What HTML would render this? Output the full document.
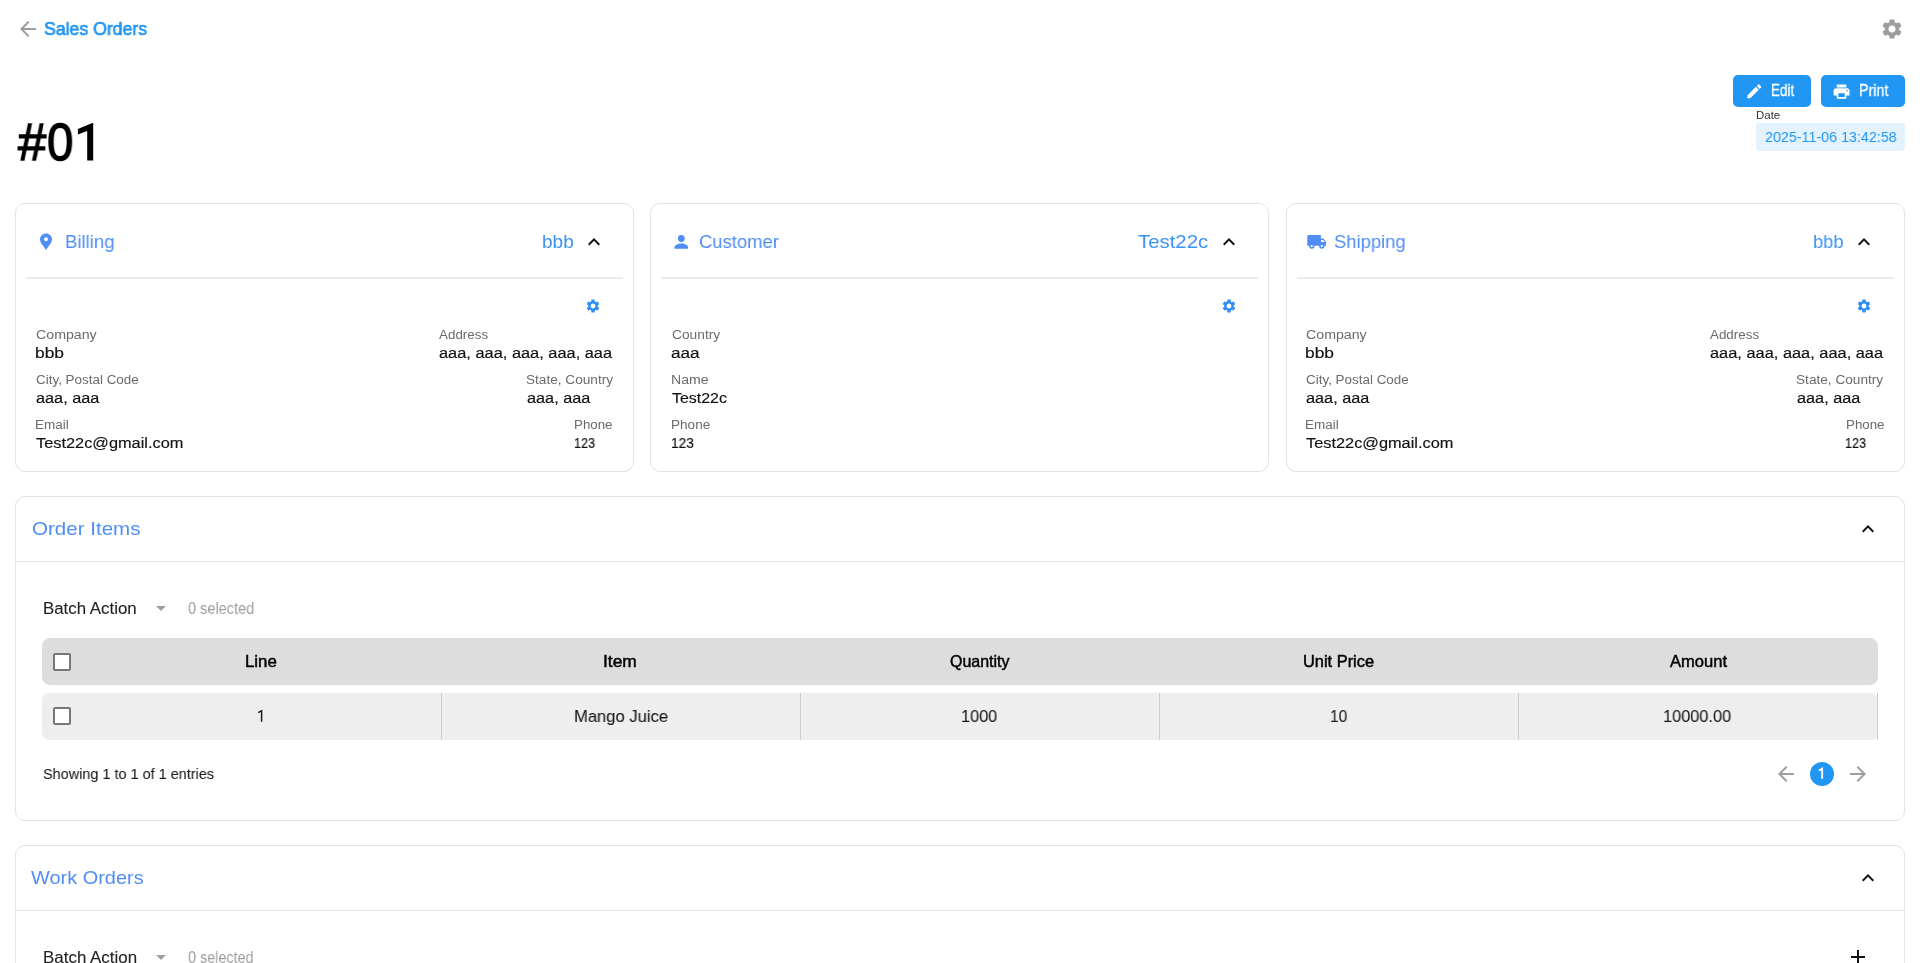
<!DOCTYPE html>
<html><head><meta charset="utf-8"><title>Sales Order #01</title>
<style>
html,body{margin:0;padding:0;background:#fff;width:1920px;height:963px;overflow:hidden;position:relative}
body{font-family:"Liberation Sans",sans-serif}
.t{position:absolute;white-space:nowrap;transform-origin:0 0;will-change:transform}
.r{position:absolute}
.i{position:absolute;overflow:visible}
</style></head><body>
<svg class="i" style="left:16px;top:17px;width:24px;height:24px" viewBox="0 0 24 24"><path fill="#9e9e9e" d="M20 11H7.83l5.59-5.59L12 4l-8 8 8 8 1.41-1.41L7.83 13H20v-2z"/></svg>
<svg class="i mh" style="left:70px;top:118px;width:30px;height:48px" viewBox="70 118 30 48"><path fill="#000" d="M93.2 123.1V160.6H87.2V130.9L77.9 134.4V128.9L92.3 123.1Z"/></svg>
<svg class="i" style="left:1880.2px;top:17px;width:24px;height:24px" viewBox="0 0 24 24"><path fill="#9e9e9e" d="M19.14 12.94c.04-.3.06-.61.06-.94 0-.32-.02-.64-.07-.94l2.03-1.58c.18-.14.23-.41.12-.61l-1.92-3.32c-.12-.22-.37-.29-.59-.22l-2.39.96c-.5-.38-1.03-.7-1.62-.94l-.36-2.54c-.04-.24-.24-.41-.48-.41h-3.84c-.24 0-.43.17-.47.41l-.36 2.54c-.59.24-1.13.57-1.62.94l-2.39-.96c-.22-.08-.47 0-.59.22L2.74 8.87c-.12.21-.08.47.12.61l2.03 1.58c-.05.3-.09.63-.09.94s.02.64.07.94l-2.03 1.58c-.18.14-.23.41-.12.61l1.92 3.32c.12.22.37.29.59.22l2.39-.96c.5.38 1.03.7 1.62.94l.36 2.54c.05.24.24.41.48.41h3.84c.24 0 .44-.17.47-.41l.36-2.54c.59-.24 1.13-.56 1.62-.94l2.39.96c.22.08.47 0 .59-.22l1.92-3.32c.12-.22.07-.47-.12-.61l-2.01-1.58zM12 15.6c-1.98 0-3.6-1.62-3.6-3.6s1.62-3.6 3.6-3.6 3.6 1.62 3.6 3.6-1.62 3.6-3.6 3.6z"/></svg>
<div class="r" style="left:1733px;top:75px;width:78px;height:32px;background:#2196f3;border-radius:5px"></div>
<div class="r" style="left:1821px;top:75px;width:84px;height:32px;background:#2196f3;border-radius:5px"></div>
<svg class="i" style="left:1744.6px;top:81.7px;width:18.67px;height:18.67px" viewBox="0 0 24 24"><path fill="#fff" d="M3 17.25V21h3.75L17.81 9.94l-3.75-3.75L3 17.25zM20.71 7.04c.39-.39.39-1.02 0-1.41l-2.34-2.34c-.39-.39-1.02-.39-1.41 0l-1.83 1.83 3.75 3.75 1.83-1.83z"/></svg>
<svg class="i" style="left:1832.4px;top:81.6px;width:19.1px;height:19.1px" viewBox="0 0 24 24"><path fill="#fff" d="M19 8H5c-1.66 0-3 1.34-3 3v6h4v4h12v-4h4v-6c0-1.66-1.34-3-3-3zm-3 11H8v-5h8v5zm3-7c-.55 0-1-.45-1-1s.45-1 1-1 1 .45 1 1-.45 1-1 1zm-1-9H6v4h12V3z"/></svg>
<div class="r" style="left:1756px;top:123px;width:149px;height:28px;background:#e3f2fd;border-radius:4px"></div>
<div class="r" style="left:15px;top:203px;width:617px;height:267px;border:1px solid #e2e2e2;border-radius:10px"></div>
<div class="r" style="left:26px;top:277px;width:597px;height:2px;background:#ececec"></div>
<div class="r" style="left:650px;top:203px;width:617px;height:267px;border:1px solid #e2e2e2;border-radius:10px"></div>
<div class="r" style="left:661px;top:277px;width:597px;height:2px;background:#ececec"></div>
<div class="r" style="left:1286px;top:203px;width:617px;height:267px;border:1px solid #e2e2e2;border-radius:10px"></div>
<div class="r" style="left:1297px;top:277px;width:597px;height:2px;background:#ececec"></div>
<svg class="i" style="left:34px;top:231px;width:24px;height:24px" viewBox="0 0 24 24"><path fill="#4f8df7" fill-rule="evenodd" d="M12 2.4c-3.3 0-6 2.6-6 5.9 0 1.5.5 2.7 1.1 3.8L12 19l4.9-6.9c.6-1.1 1.1-2.3 1.1-3.8 0-3.3-2.7-5.9-6-5.9zm0 3.9a2 2 0 1 1 0 4 2 2 0 0 1 0-4z"/></svg>
<svg class="i" style="left:669px;top:230px;width:24px;height:24px" viewBox="0 0 24 24"><circle fill="#4f8df7" cx="12.3" cy="8.5" r="3.4"/><path fill="#4f8df7" d="M5.4 18.8v-1.3c0-2.2 3.4-4 6.9-4s6.9 1.8 6.9 4v1.3z"/></svg>
<svg class="i" style="left:0;top:0;width:1920px;height:963px" viewBox="0 0 1920 963">
<path fill="#4f8df7" fill-rule="evenodd" d="M1307.3 236.2q0-1.2 1.2-1.2H1320.9V238.6H1323.4L1326 241.6V245.7H1307.3ZM1321 239.9H1323.2L1325 242.1H1321Z"/>
<circle cx="1311.8" cy="246.1" r="2.7" fill="#4f8df7"/><circle cx="1321.8" cy="246.1" r="2.7" fill="#4f8df7"/>
<circle cx="1311.8" cy="246.1" r="1.1" fill="#fff"/><circle cx="1321.8" cy="246.1" r="1.1" fill="#fff"/>
</svg>
<svg class="i" style="left:581.6px;top:230.2px;width:24px;height:24px" viewBox="0 0 24 24"><path fill="#111" d="M12 8l-6 6 1.41 1.41L12 10.83l4.58 4.58L18 14z"/></svg>
<svg class="i" style="left:1216.9px;top:230.2px;width:24px;height:24px" viewBox="0 0 24 24"><path fill="#111" d="M12 8l-6 6 1.41 1.41L12 10.83l4.58 4.58L18 14z"/></svg>
<svg class="i" style="left:1852.4px;top:230.2px;width:24px;height:24px" viewBox="0 0 24 24"><path fill="#111" d="M12 8l-6 6 1.41 1.41L12 10.83l4.58 4.58L18 14z"/></svg>
<svg class="i" style="left:585.1px;top:297.7px;width:16px;height:16px" viewBox="0 0 24 24"><path fill="#2f8ff5" d="M19.14 12.94c.04-.3.06-.61.06-.94 0-.32-.02-.64-.07-.94l2.03-1.58c.18-.14.23-.41.12-.61l-1.92-3.32c-.12-.22-.37-.29-.59-.22l-2.39.96c-.5-.38-1.03-.7-1.62-.94l-.36-2.54c-.04-.24-.24-.41-.48-.41h-3.84c-.24 0-.43.17-.47.41l-.36 2.54c-.59.24-1.13.57-1.62.94l-2.39-.96c-.22-.08-.47 0-.59.22L2.74 8.87c-.12.21-.08.47.12.61l2.03 1.58c-.05.3-.09.63-.09.94s.02.64.07.94l-2.03 1.58c-.18.14-.23.41-.12.61l1.92 3.32c.12.22.37.29.59.22l2.39-.96c.5.38 1.03.7 1.62.94l.36 2.54c.05.24.24.41.48.41h3.84c.24 0 .44-.17.47-.41l.36-2.54c.59-.24 1.13-.56 1.62-.94l2.39.96c.22.08.47 0 .59-.22l1.92-3.32c.12-.22.07-.47-.12-.61l-2.01-1.58zM12 15.6c-1.98 0-3.6-1.62-3.6-3.6s1.62-3.6 3.6-3.6 3.6 1.62 3.6 3.6-1.62 3.6-3.6 3.6z"/></svg>
<svg class="i" style="left:1220.6px;top:297.7px;width:16px;height:16px" viewBox="0 0 24 24"><path fill="#2f8ff5" d="M19.14 12.94c.04-.3.06-.61.06-.94 0-.32-.02-.64-.07-.94l2.03-1.58c.18-.14.23-.41.12-.61l-1.92-3.32c-.12-.22-.37-.29-.59-.22l-2.39.96c-.5-.38-1.03-.7-1.62-.94l-.36-2.54c-.04-.24-.24-.41-.48-.41h-3.84c-.24 0-.43.17-.47.41l-.36 2.54c-.59.24-1.13.57-1.62.94l-2.39-.96c-.22-.08-.47 0-.59.22L2.74 8.87c-.12.21-.08.47.12.61l2.03 1.58c-.05.3-.09.63-.09.94s.02.64.07.94l-2.03 1.58c-.18.14-.23.41-.12.61l1.92 3.32c.12.22.37.29.59.22l2.39-.96c.5.38 1.03.7 1.62.94l.36 2.54c.05.24.24.41.48.41h3.84c.24 0 .44-.17.47-.41l.36-2.54c.59-.24 1.13-.56 1.62-.94l2.39.96c.22.08.47 0 .59-.22l1.92-3.32c.12-.22.07-.47-.12-.61l-2.01-1.58zM12 15.6c-1.98 0-3.6-1.62-3.6-3.6s1.62-3.6 3.6-3.6 3.6 1.62 3.6 3.6-1.62 3.6-3.6 3.6z"/></svg>
<svg class="i" style="left:1856.1px;top:297.7px;width:16px;height:16px" viewBox="0 0 24 24"><path fill="#2f8ff5" d="M19.14 12.94c.04-.3.06-.61.06-.94 0-.32-.02-.64-.07-.94l2.03-1.58c.18-.14.23-.41.12-.61l-1.92-3.32c-.12-.22-.37-.29-.59-.22l-2.39.96c-.5-.38-1.03-.7-1.62-.94l-.36-2.54c-.04-.24-.24-.41-.48-.41h-3.84c-.24 0-.43.17-.47.41l-.36 2.54c-.59.24-1.13.57-1.62.94l-2.39-.96c-.22-.08-.47 0-.59.22L2.74 8.87c-.12.21-.08.47.12.61l2.03 1.58c-.05.3-.09.63-.09.94s.02.64.07.94l-2.03 1.58c-.18.14-.23.41-.12.61l1.92 3.32c.12.22.37.29.59.22l2.39-.96c.5.38 1.03.7 1.62.94l.36 2.54c.05.24.24.41.48.41h3.84c.24 0 .44-.17.47-.41l.36-2.54c.59-.24 1.13-.56 1.62-.94l2.39.96c.22.08.47 0 .59-.22l1.92-3.32c.12-.22.07-.47-.12-.61l-2.01-1.58zM12 15.6c-1.98 0-3.6-1.62-3.6-3.6s1.62-3.6 3.6-3.6 3.6 1.62 3.6 3.6-1.62 3.6-3.6 3.6z"/></svg>
<div class="r" style="left:15px;top:496px;width:1888px;height:323px;border:1px solid #e2e2e2;border-radius:10px"></div>
<div class="r" style="left:16px;top:561px;width:1888px;height:1px;background:#e4e4e4"></div>
<svg class="i" style="left:1856.4px;top:517.4px;width:24px;height:24px" viewBox="0 0 24 24"><path fill="#111" d="M12 8l-6 6 1.41 1.41L12 10.83l4.58 4.58L18 14z"/></svg>
<svg class="i" style="left:148.6px;top:595.6px;width:24px;height:24px" viewBox="0 0 24 24"><path fill="#9e9e9e" d="M7 10l5 5 5-5z"/></svg>
<div class="r" style="left:42px;top:638px;width:1836px;height:47px;background:#dddddd;border-radius:8px"></div>
<div class="r" style="left:42px;top:693px;width:1836px;height:47px;background:#eeeeee;border-radius:7px"></div>
<div class="r" style="left:441px;top:693px;width:1px;height:47px;background:#cdcdcd"></div>
<div class="r" style="left:800px;top:693px;width:1px;height:47px;background:#cdcdcd"></div>
<div class="r" style="left:1159px;top:693px;width:1px;height:47px;background:#cdcdcd"></div>
<div class="r" style="left:1518px;top:693px;width:1px;height:47px;background:#cdcdcd"></div>
<div class="r" style="left:1877px;top:693px;width:1px;height:47px;background:#cdcdcd"></div>
<svg class="i" style="left:250px;top:700px;width:20px;height:30px" viewBox="250 700 20 30"><path d="M261.6 721.8V710.7L258.2 712.6" stroke="#1a1a1a" stroke-width="1.5" fill="none"/></svg>
<div class="r" style="left:53px;top:652.5px;width:14px;height:14px;border:2px solid #777;border-radius:2px;background:#fff"></div>
<div class="r" style="left:53px;top:707.4px;width:14px;height:14px;border:2px solid #777;border-radius:2px;background:#fff"></div>
<svg class="i" style="left:1774.4px;top:762.4px;width:24px;height:24px" viewBox="0 0 24 24"><path fill="#9e9e9e" d="M20 11H7.83l5.59-5.59L12 4l-8 8 8 8 1.41-1.41L7.83 13H20v-2z"/></svg>
<svg class="i" style="left:1846px;top:762.4px;width:24px;height:24px" viewBox="0 0 24 24"><path fill="#9e9e9e" d="M12 4l-1.41 1.41L16.17 11H4v2h12.17l-5.58 5.59L12 20l8-8z"/></svg>
<div class="r" style="left:1810px;top:762px;width:24px;height:24px;background:#2196f3;border-radius:50%"></div>
<svg class="i" style="left:1800px;top:760px;width:40px;height:30px" viewBox="1800 760 40 30"><path d="M1822.15 778.85V768.6L1818.9 770.5" stroke="#fff" stroke-width="1.9" fill="none"/></svg>
<div class="r" style="left:15px;top:845px;width:1888px;height:200px;border:1px solid #e2e2e2;border-radius:10px"></div>
<div class="r" style="left:16px;top:910px;width:1888px;height:1px;background:#e4e4e4"></div>
<svg class="i" style="left:1856.4px;top:866.4px;width:24px;height:24px" viewBox="0 0 24 24"><path fill="#111" d="M12 8l-6 6 1.41 1.41L12 10.83l4.58 4.58L18 14z"/></svg>
<svg class="i" style="left:148.6px;top:944.6px;width:24px;height:24px" viewBox="0 0 24 24"><path fill="#9e9e9e" d="M7 10l5 5 5-5z"/></svg>
<svg class="i" style="left:1846px;top:945px;width:24px;height:24px" viewBox="0 0 24 24"><path fill="#111" d="M19 13h-6v6h-2v-6H5v-2h6V5h2v6h6v2z"/></svg>
<div id="sales" class="t" style="left:44.30px;top:16.85px;font-size:18.60px;line-height:23px;letter-spacing:0.000px;transform:scaleX(0.9495);color:#2196f3;-webkit-text-stroke:0.7px #2196f3;">Sales Orders</div>
<div id="num" class="t" style="left:17.53px;top:108.91px;font-size:52.47px;line-height:66px;letter-spacing:0.000px;transform:scaleX(0.9666);color:#000;-webkit-text-stroke:1.4px #000;">#</div>
<div id="num2" class="t" style="left:47.33px;top:108.91px;font-size:52.47px;line-height:66px;letter-spacing:0.000px;transform:scaleX(0.9027);color:#000;-webkit-text-stroke:1.4px #000;">0</div>
<div id="edit" class="t" style="left:1770.80px;top:80.96px;font-size:15.70px;line-height:20px;letter-spacing:0.000px;transform:scaleX(0.8547);color:#fff;-webkit-text-stroke:0.3px #fff;">Edit</div>
<div id="print" class="t" style="left:1858.80px;top:80.96px;font-size:15.70px;line-height:20px;letter-spacing:0.000px;transform:scaleX(0.9081);color:#fff;-webkit-text-stroke:0.3px #fff;">Print</div>
<div id="datel" class="t" style="left:1756.25px;top:109.01px;font-size:10.76px;line-height:13px;letter-spacing:0.000px;transform:scaleX(1.0674);color:#333;">Date</div>
<div id="datev" class="t" style="left:1764.81px;top:126.82px;font-size:15.55px;line-height:19px;letter-spacing:0.000px;transform:scaleX(0.9193);color:#2196f3;">2025-11-06 13:42:58</div>
<div id="t1" class="t" style="left:64.76px;top:230.00px;font-size:19.19px;line-height:24px;letter-spacing:0.000px;transform:scaleX(0.9690);color:#4f8df7;">Billing</div>
<div id="t2" class="t" style="left:699.36px;top:230.00px;font-size:19.19px;line-height:24px;letter-spacing:0.000px;transform:scaleX(0.9617);color:#4f8df7;">Customer</div>
<div id="t3" class="t" style="left:1334.46px;top:230.00px;font-size:19.19px;line-height:24px;letter-spacing:0.000px;transform:scaleX(0.9597);color:#4f8df7;">Shipping</div>
<div id="h1" class="t" style="left:541.67px;top:229.81px;font-size:19.04px;line-height:24px;letter-spacing:0.000px;transform:scaleX(0.9872);color:#3a93f5;">bbb</div>
<div id="h2" class="t" style="left:1137.70px;top:229.81px;font-size:18.60px;line-height:23px;letter-spacing:0.000px;transform:scaleX(1.0955);color:#3a93f5;">Test22c</div>
<div id="h3" class="t" style="left:1812.77px;top:229.81px;font-size:19.04px;line-height:24px;letter-spacing:0.000px;transform:scaleX(0.9619);color:#3a93f5;">bbb</div>
<div id="bl0" class="t" style="left:36.31px;top:326.90px;font-size:12.65px;line-height:16px;letter-spacing:0.000px;transform:scaleX(1.1221);color:#6b6b6b;">Company</div>
<div id="bv0" class="t" style="left:35.39px;top:344.04px;font-size:14.49px;line-height:18px;letter-spacing:0.000px;transform:scaleX(1.1977);color:#111;-webkit-text-stroke:0.15px #111;">bbb</div>
<div id="bl1" class="t" style="left:36.31px;top:371.90px;font-size:12.65px;line-height:16px;letter-spacing:0.000px;transform:scaleX(1.0625);color:#6b6b6b;">City, Postal Code</div>
<div id="bv1" class="t" style="left:36.42px;top:389.03px;font-size:14.01px;line-height:18px;letter-spacing:0.000px;transform:scaleX(1.1622);color:#111;-webkit-text-stroke:0.15px #111;">aaa, aaa</div>
<div id="bl2" class="t" style="left:35.31px;top:416.90px;font-size:12.65px;line-height:16px;letter-spacing:0.000px;transform:scaleX(1.0670);color:#6b6b6b;">Email</div>
<div id="bv2" class="t" style="left:36.39px;top:434.04px;font-size:14.39px;line-height:18px;letter-spacing:0.000px;transform:scaleX(1.1365);color:#111;-webkit-text-stroke:0.15px #111;">Test22c@gmail.com</div>
<div id="br0" class="t" style="left:438.81px;top:326.90px;font-size:12.65px;line-height:16px;letter-spacing:0.000px;transform:scaleX(1.0594);color:#6b6b6b;">Address</div>
<div id="bs0" class="t" style="left:439.42px;top:344.03px;font-size:14.01px;line-height:18px;letter-spacing:0.000px;transform:scaleX(1.1703);color:#111;-webkit-text-stroke:0.15px #111;">aaa, aaa, aaa, aaa, aaa</div>
<div id="br1" class="t" style="left:526.01px;top:371.90px;font-size:12.65px;line-height:16px;letter-spacing:0.000px;transform:scaleX(1.0774);color:#6b6b6b;">State, Country</div>
<div id="bs1" class="t" style="left:526.82px;top:389.03px;font-size:14.01px;line-height:18px;letter-spacing:0.000px;transform:scaleX(1.1622);color:#111;-webkit-text-stroke:0.15px #111;">aaa, aaa</div>
<div id="br2" class="t" style="left:574.21px;top:416.90px;font-size:12.65px;line-height:16px;letter-spacing:0.000px;transform:scaleX(1.0532);color:#6b6b6b;">Phone</div>
<div id="bs2" class="t" style="left:574.19px;top:434.04px;font-size:14.39px;line-height:18px;letter-spacing:0.000px;transform:scaleX(0.8786);color:#111;-webkit-text-stroke:0.15px #111;">123</div>
<div id="sl0" class="t" style="left:1306.31px;top:326.90px;font-size:12.65px;line-height:16px;letter-spacing:0.000px;transform:scaleX(1.1221);color:#6b6b6b;">Company</div>
<div id="sv0" class="t" style="left:1305.39px;top:344.04px;font-size:14.49px;line-height:18px;letter-spacing:0.000px;transform:scaleX(1.1977);color:#111;-webkit-text-stroke:0.15px #111;">bbb</div>
<div id="sl1" class="t" style="left:1306.31px;top:371.90px;font-size:12.65px;line-height:16px;letter-spacing:0.000px;transform:scaleX(1.0625);color:#6b6b6b;">City, Postal Code</div>
<div id="sv1" class="t" style="left:1306.42px;top:389.03px;font-size:14.01px;line-height:18px;letter-spacing:0.000px;transform:scaleX(1.1622);color:#111;-webkit-text-stroke:0.15px #111;">aaa, aaa</div>
<div id="sl2" class="t" style="left:1305.31px;top:416.90px;font-size:12.65px;line-height:16px;letter-spacing:0.000px;transform:scaleX(1.0670);color:#6b6b6b;">Email</div>
<div id="sv2" class="t" style="left:1306.39px;top:434.04px;font-size:14.39px;line-height:18px;letter-spacing:0.000px;transform:scaleX(1.1365);color:#111;-webkit-text-stroke:0.15px #111;">Test22c@gmail.com</div>
<div id="sr0" class="t" style="left:1710.11px;top:326.90px;font-size:12.65px;line-height:16px;letter-spacing:0.000px;transform:scaleX(1.0584);color:#6b6b6b;">Address</div>
<div id="ss0" class="t" style="left:1710.02px;top:344.03px;font-size:14.01px;line-height:18px;letter-spacing:0.000px;transform:scaleX(1.1703);color:#111;-webkit-text-stroke:0.15px #111;">aaa, aaa, aaa, aaa, aaa</div>
<div id="sr1" class="t" style="left:1796.31px;top:371.90px;font-size:12.65px;line-height:16px;letter-spacing:0.000px;transform:scaleX(1.0784);color:#6b6b6b;">State, Country</div>
<div id="ss1" class="t" style="left:1797.42px;top:389.03px;font-size:14.01px;line-height:18px;letter-spacing:0.000px;transform:scaleX(1.1622);color:#111;-webkit-text-stroke:0.15px #111;">aaa, aaa</div>
<div id="sr2" class="t" style="left:1845.51px;top:416.90px;font-size:12.65px;line-height:16px;letter-spacing:0.000px;transform:scaleX(1.0540);color:#6b6b6b;">Phone</div>
<div id="ss2" class="t" style="left:1844.79px;top:434.04px;font-size:14.39px;line-height:18px;letter-spacing:0.000px;transform:scaleX(0.8786);color:#111;-webkit-text-stroke:0.15px #111;">123</div>
<div id="cl0" class="t" style="left:671.61px;top:326.90px;font-size:12.65px;line-height:16px;letter-spacing:0.000px;transform:scaleX(1.0890);color:#6b6b6b;">Country</div>
<div id="cv0" class="t" style="left:671.02px;top:344.03px;font-size:14.01px;line-height:18px;letter-spacing:0.000px;transform:scaleX(1.2270);color:#111;-webkit-text-stroke:0.15px #111;">aaa</div>
<div id="cl1" class="t" style="left:670.61px;top:371.90px;font-size:12.65px;line-height:16px;letter-spacing:0.000px;transform:scaleX(1.1168);color:#6b6b6b;">Name</div>
<div id="cv1" class="t" style="left:671.99px;top:389.04px;font-size:14.39px;line-height:18px;letter-spacing:0.000px;transform:scaleX(1.1085);color:#111;-webkit-text-stroke:0.15px #111;">Test22c</div>
<div id="cl2" class="t" style="left:670.61px;top:416.90px;font-size:12.65px;line-height:16px;letter-spacing:0.000px;transform:scaleX(1.0736);color:#6b6b6b;">Phone</div>
<div id="cv2" class="t" style="left:670.99px;top:434.04px;font-size:14.39px;line-height:18px;letter-spacing:0.000px;transform:scaleX(0.9509);color:#111;-webkit-text-stroke:0.15px #111;">123</div>
<div id="oi" class="t" style="left:32.27px;top:517.01px;font-size:19.04px;line-height:24px;letter-spacing:0.000px;transform:scaleX(1.0801);color:#4f8df7;">Order Items</div>
<div id="ba1" class="t" style="left:42.54px;top:597.71px;font-size:16.64px;line-height:21px;letter-spacing:0.000px;transform:scaleX(1.0141);color:#212121;-webkit-text-stroke:0.1px #212121;">Batch Action</div>
<div id="sel1" class="t" style="left:188.34px;top:597.76px;font-size:16.64px;line-height:21px;letter-spacing:0.000px;transform:scaleX(0.8743);color:#9e9e9e;">0 selected</div>
<div id="th1" class="t" style="left:245.30px;top:651.58px;font-size:15.70px;line-height:20px;letter-spacing:0.000px;transform:scaleX(1.0745);color:#000;-webkit-text-stroke:0.45px #000;">Line</div>
<div id="th2" class="t" style="left:603.40px;top:651.58px;font-size:15.70px;line-height:20px;letter-spacing:0.000px;transform:scaleX(1.1085);color:#000;-webkit-text-stroke:0.45px #000;">Item</div>
<div id="th3" class="t" style="left:949.60px;top:651.58px;font-size:15.70px;line-height:20px;letter-spacing:0.000px;transform:scaleX(1.0181);color:#000;-webkit-text-stroke:0.45px #000;">Quantity</div>
<div id="th4" class="t" style="left:1302.90px;top:651.58px;font-size:15.70px;line-height:20px;letter-spacing:0.000px;transform:scaleX(1.0447);color:#000;-webkit-text-stroke:0.45px #000;">Unit Price</div>
<div id="th5" class="t" style="left:1669.50px;top:651.58px;font-size:15.70px;line-height:20px;letter-spacing:0.000px;transform:scaleX(1.0558);color:#000;-webkit-text-stroke:0.45px #000;">Amount</div>
<div id="td2" class="t" style="left:573.51px;top:705.75px;font-size:17.01px;line-height:21px;letter-spacing:0.000px;transform:scaleX(0.9757);color:#1a1a1a;-webkit-text-stroke:0.1px #1a1a1a;">Mango Juice</div>
<div id="td3" class="t" style="left:961.21px;top:705.75px;font-size:17.01px;line-height:21px;letter-spacing:0.000px;transform:scaleX(0.9585);color:#1a1a1a;-webkit-text-stroke:0.1px #1a1a1a;">1000</div>
<div id="td4" class="t" style="left:1329.71px;top:705.75px;font-size:17.01px;line-height:21px;letter-spacing:0.000px;transform:scaleX(0.9112);color:#1a1a1a;-webkit-text-stroke:0.1px #1a1a1a;">10</div>
<div id="td5" class="t" style="left:1663.31px;top:705.75px;font-size:17.01px;line-height:21px;letter-spacing:0.000px;transform:scaleX(0.9612);color:#1a1a1a;-webkit-text-stroke:0.1px #1a1a1a;">10000.00</div>
<div id="show" class="t" style="left:42.81px;top:763.75px;font-size:15.55px;line-height:19px;letter-spacing:0.000px;transform:scaleX(0.9290);color:#1a1a1a;-webkit-text-stroke:0.1px #1a1a1a;">Showing 1 to 1 of 1 entries</div>
<div id="wo" class="t" style="left:31.31px;top:865.90px;font-size:18.46px;line-height:23px;letter-spacing:0.000px;transform:scaleX(1.0814);color:#4f8df7;">Work Orders</div>
<div id="ba2" class="t" style="left:42.53px;top:946.97px;font-size:16.72px;line-height:21px;letter-spacing:0.000px;transform:scaleX(1.0137);color:#212121;-webkit-text-stroke:0.1px #212121;">Batch Action</div>
<div id="sel2" class="t" style="left:188.33px;top:947.00px;font-size:16.72px;line-height:21px;letter-spacing:0.000px;transform:scaleX(0.8611);color:#9e9e9e;">0 selected</div>
</body></html>
